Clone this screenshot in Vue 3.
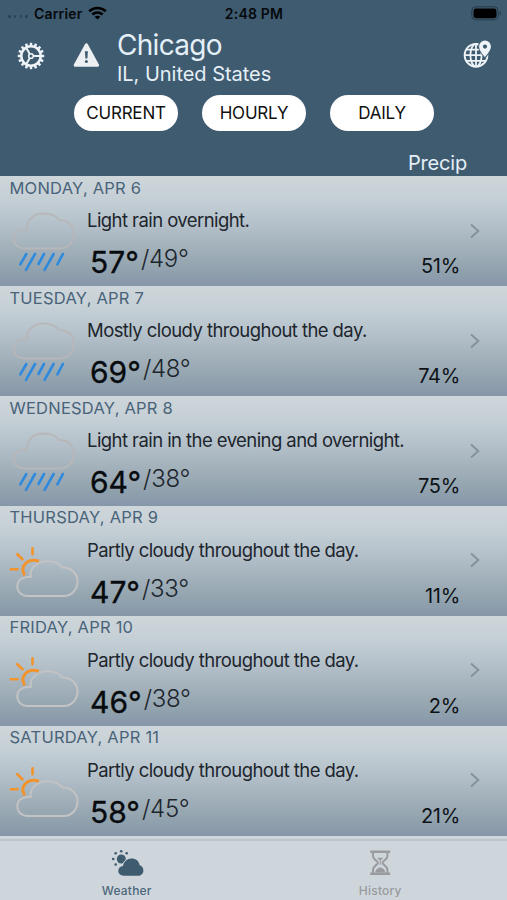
<script setup>
const modes = ['CURRENT', 'HOURLY', 'DAILY']
const partly = 'Partly cloudy throughout the day.'
const days = [
  { date: 'MONDAY, APR 6', icon: 'rain', text: 'Light rain overnight.', hi: 57, lo: 49, precip: 51 },
  { date: 'TUESDAY, APR 7', icon: 'rain', text: 'Mostly cloudy throughout the day.', hi: 69, lo: 48, precip: 74 },
  { date: 'WEDNESDAY, APR 8', icon: 'rain', text: 'Light rain in the evening and overnight.', hi: 64, lo: 38, precip: 75 },
  { date: 'THURSDAY, APR 9', icon: 'sun', text: partly, hi: 47, lo: 33, precip: 11 },
  { date: 'FRIDAY, APR 10', icon: 'sun', text: partly, hi: 46, lo: 38, precip: 2 },
  { date: 'SATURDAY, APR 11', icon: 'sun', text: partly, hi: 58, lo: 45, precip: 21 },
]
const teeth = Array.from({ length: 16 }, (_, i) => i * 22.5)
const cloud = 'M28 69C21.5 69 17.3 64.8 17.3 59.3C17.3 53.5 22 49.8 30.8 49.8C29.3 41.5 37 34.2 47 34.2C54 34.2 59.5 36.5 62.5 40.6C71 40.6 77.6 46.3 77.6 54C77.6 62.7 71.5 69 63.5 69Z'
</script>

<template>
  <div class="screen">
    <header class="header">
      <div class="status">
        <div class="carrier">
          <span class="dots"><i v-for="n in 4" :key="n"></i></span>
          <span>Carrier</span>
          <svg class="wifi" width="19" height="14" viewBox="0 0 19 14">
            <g fill="none" stroke="#000" stroke-width="2.6">
              <path d="M1.2 5.2C6 .9 13 .9 17.8 5.2" />
              <path d="M4.3 8.6C7.4 5.9 11.6 5.9 14.7 8.6" />
            </g>
            <path d="M9.5 13.6L6.6 10.7C8.2 9.3 10.8 9.3 12.4 10.7Z" />
          </svg>
        </div>
        <span class="time">2:48 PM</span>
        <svg class="battery" width="31" height="15" viewBox="0 0 31 15">
          <rect x=".8" y=".8" width="26.4" height="13" rx="4" fill="none" stroke="#263a49" />
          <rect x="2.5" y="2.6" width="23" height="9.6" rx="2.4" />
          <path d="M28.6 5v4.6c1.7-.7 1.7-3.9 0-4.6z" fill="#263a49" />
        </svg>
      </div>

      <div class="place">
        <svg class="gear" width="28" height="28" viewBox="-14 -14 28 28">
          <g stroke="#eef4f8" fill="none">
            <circle r="9.7" stroke-width="2.5" />
            <path v-for="t in teeth" :key="t" :transform="`rotate(${t})`" d="M0-10.2V-13.2" stroke-width="2.5" />
            <path d="M2.4 0H9.5M-1.2-2.1L-4.8-8.2M-1.2 2.1L-4.8 8.2" stroke-width="2" />
            <circle r="2.3" stroke-width="1.6" />
          </g>
        </svg>
        <svg class="warn" width="28" height="26" viewBox="0 0 28 26">
          <path d="M14.4 2.8L25.6 23.2H3.2Z" fill="#edf0f3" stroke="#edf0f3" stroke-width="3" stroke-linejoin="round" />
          <path d="M12.9 9.2h3l-.5 7.4h-2z" fill="#3f5b70" />
          <circle cx="14.4" cy="19.4" r="1.5" fill="#3f5b70" />
        </svg>
        <div class="names">
          <div class="city">Chicago</div>
          <div class="region">IL, United States</div>
        </div>
        <svg class="globe" width="30" height="30" viewBox="0 0 30 30">
          <g fill="none" stroke="#eef4f8" stroke-width="1.8">
            <circle cx="13" cy="16.2" r="11.4" />
            <ellipse cx="13" cy="16.2" rx="5.6" ry="11.4" />
            <path d="M13 4.8V27.6M1.6 16.2H24.4M3.2 10.7H22.8M3.2 21.9H22.8" />
          </g>
          <path d="M21.9 18.3C19 14.4 16.1 11.2 16.1 7.5A5.9 5.9 0 0 1 27.9 7.5C27.9 11.2 24.8 14.4 21.9 18.3Z" fill="#eef4f8" stroke="#3f5b70" stroke-width="2" paint-order="stroke" />
          <circle cx="22" cy="7.6" r="2.1" fill="#3f5b70" />
        </svg>
      </div>

      <nav class="modes">
        <button v-for="m in modes" :key="m" type="button">{{ m }}</button>
      </nav>
      <div class="column-title">Precip</div>
    </header>

    <main class="days">
      <section v-for="d in days" :key="d.date" class="day">
        <div class="date">{{ d.date }}</div>
        <div class="body">
          <svg class="icon" width="87" height="88" viewBox="0 0 87 88" fill="none" stroke-linecap="round">
            <g v-if="d.icon === 'rain'">
              <path :d="cloud" transform="translate(-3.6 -18.6)" stroke="#b7b7b9" stroke-width="2" />
              <path d="M26.3 56L20.3 66.3M35 56L26 71.8M44 56L38.5 66M53.6 56L44.6 71.8M62.9 56L57.4 66.3" stroke="#2f8ade" stroke-width="2.6" />
            </g>
            <g v-else>
              <path :d="cloud" stroke="#c3c3c4" stroke-width="2" />
              <path d="M24.8 48.3C19.2 40 27 30.7 38.9 34.2" stroke="#f2942b" stroke-width="3" stroke-linecap="butt" />
              <path d="M32.5 21.2V27.2M17.3 27.2L22.5 32.3M10.9 42.3H17.5" stroke="#f2942b" stroke-width="2.6" />
            </g>
          </svg>
          <div class="info">
            <div class="text">{{ d.text }}</div>
            <div class="temps">
              <span class="hi">{{ d.hi }}°</span><span class="lo">/{{ d.lo }}°</span>
            </div>
          </div>
          <div class="precip">{{ d.precip }}%</div>
          <svg class="chevron" width="10" height="16" viewBox="0 0 10 16">
            <path d="M1 1.5L8.3 8L1 14.5" fill="none" stroke="#85929c" stroke-width="2" />
          </svg>
        </div>
      </section>
    </main>

    <footer class="tabs">
      <div class="tab active">
        <svg width="34" height="28" viewBox="0 0 34 28" fill="#3f5b70">
          <circle cx="11.3" cy="10" r="4.5" />
          <circle v-for="(p, i) in [[11.2, 2.2], [5.7, 4.3], [16.7, 4.3], [3.2, 10], [5.7, 15.5]]" :key="i" :cx="p[0]" :cy="p[1]" r="1.3" />
          <path d="M13.8 26.7C10.3 26.7 8.3 24.6 8.3 21.8C8.3 19.2 10.3 17.2 13 17C13.8 12.6 17.3 9.6 21.5 9.6C26 9.6 29 12.3 29.7 16.2C32 17 33.4 19 33.4 21.4C33.4 24.6 31 26.7 28 26.7Z" stroke="#ced6dc" stroke-width="2" paint-order="stroke" />
        </svg>
        <span>Weather</span>
      </div>
      <div class="tab">
        <svg width="34" height="28" viewBox="0 0 34 28" fill="#999b9e">
          <path d="M7.2 1.5h20v2.6h-20zM7.2 23.4h20v2.6h-20z" />
          <path d="M10 4V7.2C10 10.5 15 12 15 13.8C15 15.6 10 17.2 10 20.5V24M24.4 4V7.2C24.4 10.5 19.4 12 19.4 13.8C19.4 15.6 24.4 17.2 24.4 20.5V24" fill="none" stroke="#999b9e" stroke-width="2" />
          <path d="M14 8.8h6.4L17.2 12zM16.7 12h1v4h-1zM12.2 23.5C12.6 20 15.5 18.8 17.2 18.6C19 18.8 21.8 20 22.2 23.5z" />
        </svg>
        <span>History</span>
      </div>
    </footer>
  </div>
</template>

<style>
body {
  margin: 0;
  overflow: hidden;
}
</style>

<style scoped>
.screen {
  display: flex;
  flex-direction: column;
  width: 507px;
  height: 900px;
  overflow: hidden;
  background: #ced6dc;
  font-family: Inter, 'Liberation Sans', sans-serif;
  white-space: nowrap;
}
.header {
  height: 176px;
  flex: none;
  box-sizing: border-box;
  background: #3f5b70;
  color: #e4eff7;
}
.status {
  display: grid;
  grid-template-columns: 1fr auto 1fr;
  align-items: center;
  height: 26px;
  padding: 0 5px 0 8px;
  color: #06090c;
  font-size: 14px;
  font-weight: 600;
  letter-spacing: 0.2px;
}
.time {
  margin-left: -2px;
}
.carrier {
  display: flex;
  align-items: center;
}
.dots {
  display: flex;
  gap: 3.3px;
  margin: 7px 6px 0 0;
}
.dots i {
  width: 2.5px;
  height: 2.5px;
  border-radius: 50%;
  background: #2b4253;
}
.wifi {
  margin: 0 0 1px 5.5px;
}
.battery {
  justify-self: end;
}
.place {
  display: flex;
  height: 69px;
}
.gear {
  margin: 16px 0 0 17px;
}
.warn {
  margin: 16px 0 0 27px;
}
.names {
  margin-left: 17px;
  flex: 1;
}
.city {
  font-size: 28px;
  line-height: 34px;
  margin-top: 2px;
  letter-spacing: -0.7px;
}
.region {
  font-size: 20px;
  line-height: 24px;
  letter-spacing: -0.03px;
}
.globe {
  margin: 13px 14px 0 0;
}
.modes {
  display: flex;
  gap: 24px;
  padding-left: 74px;
}
.modes button {
  width: 104px;
  height: 36px;
  padding: 0;
  border: 0;
  border-radius: 18px;
  background: #fff;
  color: #111;
  font: 400 17px/36px Inter, 'Liberation Sans', sans-serif;
  letter-spacing: -0.2px;
}
.column-title {
  padding: 19px 40px 0 0;
  text-align: right;
  font-size: 20px;
  line-height: 26px;
  letter-spacing: -0.2px;
}
.days {
  display: flex;
  flex-direction: column;
  height: 659.5px;
  flex: none;
}
.day {
  flex: 1;
  min-height: 0;
  background: linear-gradient(#ced6da 0%, #c4cfd5 22%, #b3c0c9 45%, #a2b0ba 66%, #94a5b0 82%, #8696a9 100%);
}
.date {
  padding: 1.7px 0 0 9.5px;
  font-size: 16.5px;
  line-height: 20px;
  letter-spacing: 0.22px;
  color: #49637a;
}
.body {
  display: grid;
  grid-template-columns: 87px minmax(0, 1fr) 60px 37px;
  height: 88px;
  color: #1d252d;
}
.text {
  padding-top: 10.5px;
  font-size: 18.5px;
  line-height: 24px;
  letter-spacing: -0.57px;
}
.temps {
  display: flex;
  padding: 11.8px 0 0 3px;
}
.hi {
  font-size: 30px;
  line-height: 36px;
  font-weight: 400;
  -webkit-text-stroke: 0.35px #080b0e;
  color: #080b0e;
}
.lo {
  margin-left: 2px;
  font-size: 24px;
  line-height: 29px;
  font-weight: 300;
  letter-spacing: -0.3px;
}
.precip {
  padding: 56.3px 10px 0 0;
  text-align: right;
  font-size: 20px;
  line-height: 24px;
  letter-spacing: -0.3px;
  color: #0d1217;
}
.chevron {
  margin-top: 25px;
}
.tabs {
  display: grid;
  grid-template-columns: 1fr 1fr;
  margin-top: 3px;
  flex: 1;
  border-top: 2px solid #bdc5cb;
}
.tab {
  display: flex;
  flex-direction: column;
  align-items: center;
  padding-top: 8px;
  font-size: 12px;
  line-height: 16px;
  font-weight: 500;
  letter-spacing: 0.2px;
  color: #999b9e;
}
.tab span {
  margin-top: 6px;
}
.active {
  color: #4c667a;
}
</style>
